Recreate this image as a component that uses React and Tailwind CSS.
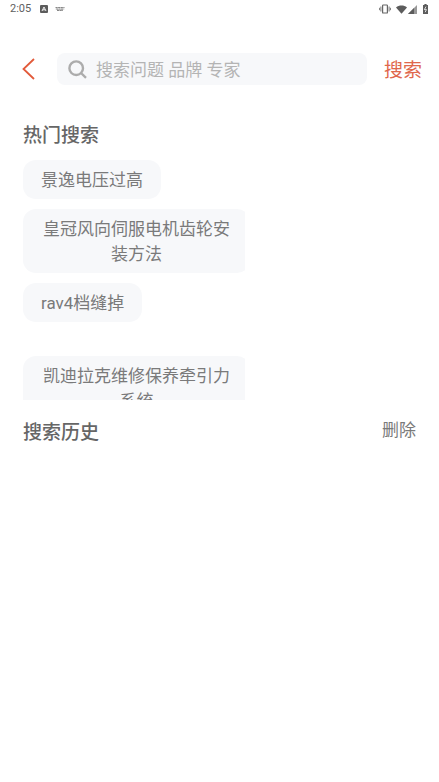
import React from 'react'

const hotSearches = [
  { text: '景逸电压过高' },
  { text: '皇冠风向伺服电机齿轮安装方法', wide: true },
  { text: 'rav4档缝掉' },
  { text: '凯迪拉克维修保养牵引力系统', wide: true, spaced: true },
]

function StatusBar() {
  return (
    <div className="flex h-[18px] items-center justify-between pl-[10px] pr-[11px] text-[#606060]">
      <div className="flex items-center">
        <span className="text-[11px] leading-[18px]">2:05</span>
        <svg className="ml-[9px]" width="8" height="8" viewBox="0 0 8 8">
          <rect width="8" height="8" rx="1" fill="#5c5c5c" />
          <path d="M2 6 4 2l2 4M2.8 4.8h2.4" fill="none" stroke="#fff" strokeWidth="0.9" />
        </svg>
        <svg className="ml-[7px]" width="10" height="6" viewBox="0 0 10 6">
          <path d="M0.5 1.5h9M0.8 3h8.4M2 4.4h6" fill="none" stroke="#888" strokeWidth="1.1" strokeDasharray="2.2 0.4" />
        </svg>
      </div>
      <div className="flex items-center">
        <svg width="12" height="10" viewBox="0 0 12 10" fill="none" stroke="#666">
          <rect x="3.6" y="1" width="4.8" height="8" rx="0.6" strokeWidth="1.2" />
          <path d="M1.9 2.5v5M10.1 2.5v5M0.4 3.8v2.4M11.6 3.8v2.4" strokeWidth="0.9" />
        </svg>
        <svg className="ml-[5px]" width="11" height="9" viewBox="0 0 12 9">
          <path d="M0 2.2C3.4-.5 8.6-.5 12 2.2L6 9z" fill="#5c5c5c" />
        </svg>
        <svg className="ml-px" width="9" height="9" viewBox="0 0 9 9">
          <path d="M9 0v9H0z" fill="#999" />
          <path d="M6 3v6H0z" fill="#5c5c5c" />
        </svg>
        <svg className="ml-[6px]" width="5" height="10" viewBox="0 0 5 10">
          <path d="M1.4 0h2.2v1H5v9H0V1h1.4z" fill="#5c5c5c" />
          <path d="M3 2.6 1.4 5.6h2L2.2 8.2" fill="none" stroke="#fff" strokeWidth="0.8" />
        </svg>
      </div>
    </div>
  )
}

function SearchHeader() {
  return (
    <form className="mt-[35px] flex h-8 items-center pl-[22px] pr-[17px]" onSubmit={(e) => e.preventDefault()}>
      <button type="button" aria-label="返回" className="flex-none">
        <svg width="13" height="22" viewBox="0 0 13 22" fill="none" stroke="#e25a3a" strokeWidth="1.8">
          <path d="M12 1 1.5 11 12 21" />
        </svg>
      </button>
      <label className="ml-[22px] flex h-8 min-w-0 flex-1 items-center rounded-lg bg-[#f7f8fa] pl-[11px] pr-3">
        <svg className="flex-none" width="19" height="19" viewBox="0 0 19 19" fill="none" stroke="#acacac" strokeWidth="2.4">
          <circle cx="8.2" cy="8.2" r="6.8" />
          <path d="m13 13 5 4.8" />
        </svg>
        <input
          type="text"
          aria-label="搜索"
          placeholder="搜索问题 品牌 专家"
          className="ml-[9px] h-8 min-w-0 flex-1 bg-transparent pt-0.5 text-[17px] text-[#777777] outline-none placeholder:text-[#b4b4b4]"
        />
      </label>
      <button type="submit" className="ml-[17px] flex-none pt-1 text-[19px] leading-8 text-[#e0674c]">搜索</button>
    </form>
  )
}

export default function App() {
  return (
    <div className="min-h-screen bg-white font-['Roboto','Noto_Sans_CJK_SC',sans-serif] text-[#7a7a7a]">
      <StatusBar />
      <SearchHeader />

      <main className="px-[23px] pt-[38px]">
        <section>
          <h2 className="text-[19px] font-medium leading-[25px] text-[#666666]">热门搜索</h2>
          <div className="mt-3 flex h-60 max-w-[222px] flex-col items-start gap-[10px] overflow-hidden">
            {hotSearches.map((item) => (
              <button
                key={item.text}
                type="button"
                className={`flex-none rounded-[13px] bg-[#f7f8fa] px-[18px] pb-[6px] pt-2 text-center text-[17px] leading-[25px] ${item.wide ? 'w-[227px]' : ''} ${item.spaced ? 'mt-6' : ''}`}
              >
                {item.text}
              </button>
            ))}
          </div>
        </section>

        <section className="mt-5 flex items-start justify-between">
          <h2 className="text-[19px] font-medium leading-[25px] text-[#666666]">搜索历史</h2>
          <button type="button" className="text-[17px] leading-[21px]">删除</button>
        </section>
      </main>
    </div>
  )
}
